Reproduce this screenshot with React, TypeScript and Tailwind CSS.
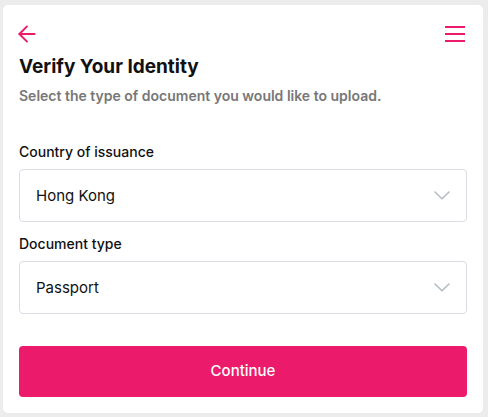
import { ArrowLeft } from 'lucide-react';

function Chevron() {
  return (
    <svg width="16" height="9" viewBox="0 0 16 9" fill="none" stroke="#b3bbc6" strokeWidth="1.6" strokeLinecap="round" strokeLinejoin="round">
      <polyline points="1,1 8,7.8 15,1" />
    </svg>
  );
}

function SelectField({ label, value }: { label: string; value: string }) {
  return (
    <div>
      <div className="text-[14px] font-medium leading-5 text-[#111]">{label}</div>
      <div className="mt-[7px] flex h-[53px] items-center justify-between rounded-[4px] border border-[#d9dde3] pr-4 pl-4">
        <span className="pt-[2px] text-[15px] text-[#111]">{value}</span>
        <Chevron />
      </div>
    </div>
  );
}

export default function App() {
  return (
    <div className="min-h-[417px] bg-[#ececec] pt-[5px] pr-[5px] pb-[4px] pl-[3px] font-['Inter',sans-serif]">
      <div className="rounded-[5px] bg-white px-4 pt-4 pb-4">
        <div className="flex h-[26px] items-center justify-between">
          <ArrowLeft size={26} strokeWidth={1.8} className="-ml-[5px] text-[#ec1a6a]" />
          <svg width="20" height="16" viewBox="0 0 20 16" className="mr-[2px]" fill="#ec1a6a">
            <rect x="0" y="0" width="20" height="2" />
            <rect x="0" y="7" width="20" height="2" />
            <rect x="0" y="14" width="20" height="2" />
          </svg>
        </div>
        <h1 className="mt-[6px] text-[19px] leading-7 font-bold text-[#111]">Verify Your Identity</h1>
        <p className="mt-[4px] text-[14px] font-semibold text-[#777]">Select the type of document you would like to upload.</p>
        <div className="mt-[36px] flex flex-col gap-[12px]">
          <SelectField label="Country of issuance" value="Hong Kong" />
          <SelectField label="Document type" value="Passport" />
        </div>
        <button className="mt-[32px] h-[51px] w-full rounded-[4px] bg-[#ec1a6a] text-[15px] font-medium text-white">Continue</button>
      </div>
    </div>
  );
}
